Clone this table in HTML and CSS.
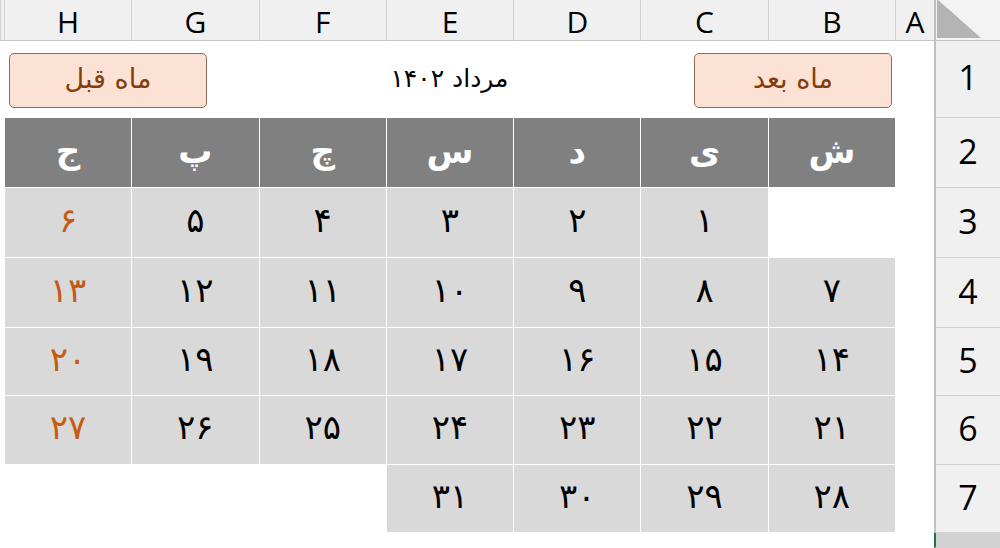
FILE: index.html
```html
<!DOCTYPE html>
<html lang="fa">
<head>
  <meta charset="UTF-8">
  <meta name="viewport" content="width=device-width, initial-scale=1.0">
  <title>تقویم مرداد ۱۴۰۲</title>
  <link rel="stylesheet" href="styles.css">
</head>
<body>

  <div class="sheet">
    <!-- column letters -->
    <div class="corner"><span class="corner-mark"></span></div>
    <div class="col-head">A</div>
    <div class="col-head">B</div>
    <div class="col-head">C</div>
    <div class="col-head">D</div>
    <div class="col-head">E</div>
    <div class="col-head">F</div>
    <div class="col-head">G</div>
    <div class="col-head">H</div>
    <div class="col-head"></div>

    <!-- row 1: navigation -->
    <div class="row-head">1</div>
    <div class="cell"></div>
    <div class="cell span-2 nav-next"><button class="nav-btn">ماه بعد</button></div>
    <div class="cell span-3 month-title">مرداد ۱۴۰۲</div>
    <div class="cell span-2 nav-prev"><button class="nav-btn">ماه قبل</button></div>
    <div class="cell"></div>

    <!-- row 2: week days -->
    <div class="row-head">2</div>
    <div class="cell"></div>
    <div class="day-name">ش</div>
    <div class="day-name">ی</div>
    <div class="day-name">د</div>
    <div class="day-name">س</div>
    <div class="day-name">چ</div>
    <div class="day-name">پ</div>
    <div class="day-name">ج</div>
    <div class="cell"></div>

    <!-- row 3 -->
    <div class="row-head">3</div>
    <div class="cell"></div>
    <div class="cell"></div>
    <div class="day">۱</div>
    <div class="day">۲</div>
    <div class="day">۳</div>
    <div class="day">۴</div>
    <div class="day">۵</div>
    <div class="day fri">۶</div>
    <div class="cell"></div>

    <!-- row 4 -->
    <div class="row-head">4</div>
    <div class="cell"></div>
    <div class="day">۷</div>
    <div class="day">۸</div>
    <div class="day">۹</div>
    <div class="day">۱۰</div>
    <div class="day">۱۱</div>
    <div class="day">۱۲</div>
    <div class="day fri">۱۳</div>
    <div class="cell"></div>

    <!-- row 5 -->
    <div class="row-head">5</div>
    <div class="cell"></div>
    <div class="day">۱۴</div>
    <div class="day">۱۵</div>
    <div class="day">۱۶</div>
    <div class="day">۱۷</div>
    <div class="day">۱۸</div>
    <div class="day">۱۹</div>
    <div class="day fri">۲۰</div>
    <div class="cell"></div>

    <!-- row 6 -->
    <div class="row-head">6</div>
    <div class="cell"></div>
    <div class="day">۲۱</div>
    <div class="day">۲۲</div>
    <div class="day">۲۳</div>
    <div class="day">۲۴</div>
    <div class="day">۲۵</div>
    <div class="day">۲۶</div>
    <div class="day fri">۲۷</div>
    <div class="cell"></div>

    <!-- row 7 -->
    <div class="row-head">7</div>
    <div class="cell"></div>
    <div class="day">۲۸</div>
    <div class="day">۲۹</div>
    <div class="day">۳۰</div>
    <div class="day">۳۱</div>
    <div class="cell"></div>
    <div class="cell"></div>
    <div class="cell"></div>
    <div class="cell"></div>

    <!-- row 8 (selected, cut off) -->
    <div class="row-head row-selected"></div>
  </div>

</body>
</html>
```

FILE: styles.css
```css
html, body {
  margin: 0;
  padding: 0;
  height: 100%;
  overflow: hidden;
  background-color: #fff;
}
.sheet {
  direction: rtl;
  display: grid;
  grid-template-columns: 66px 39px repeat(7, 127.3px) 1fr;
  grid-template-rows: 41px 77px 70px 70px 70px 68px 69px 68px 1fr;
  height: 100vh;
  font-family: "DejaVu Sans", sans-serif;
}
.corner {
  display: flex;
  align-items: flex-end;
  justify-content: flex-end;
  box-sizing: border-box;
  padding-left: 1px;
  padding-bottom: 2px;
  background-color: #f3f3f3;
  border-left: 2px solid #bfbfbf;
  border-bottom: 1px solid #c6c6c6;
}
.corner-mark {
  width: 44px;
  height: 39px;
  background-color: #b4b4b4;
  clip-path: polygon(0 0, 0 100%, 100% 100%);
}
.col-head {
  display: flex;
  align-items: center;
  justify-content: center;
  box-sizing: border-box;
  background-color: #f0f0f0;
  border-left: 1px solid #d2d2d2;
  border-bottom: 1px solid #c6c6c6;
  font-family: "Open Sans", sans-serif;
  font-size: 30px;
  color: #000;
  padding-top: 2px;
}
.row-head {
  grid-column: 1;
  display: flex;
  align-items: center;
  justify-content: center;
  box-sizing: border-box;
  background-color: #f0f0f0;
  border-left: 2px solid #bfbfbf;
  border-bottom: 1px solid #d0d0d0;
  font-family: "Open Sans", sans-serif;
  font-size: 34px;
  color: #000;
  padding-bottom: 4px;
}
.row-selected {
  background-color: #d2d2d2;
  border-left: 2px solid #217346;
}
.cell {
  background-color: #fff;
}
.span-2 {
  grid-column: span 2;
}
.span-3 {
  grid-column: span 3;
}
.nav-next,
.nav-prev {
  display: flex;
  align-items: center;
  box-sizing: border-box;
}
.nav-next {
  justify-content: flex-start;
  padding-right: 3px;
}
.nav-prev {
  justify-content: flex-end;
  padding-left: 5px;
}
.nav-btn {
  width: 198px;
  height: 55px;
  margin-top: 1px;
  background-color: #fbe2d5;
  border: 1px solid #8f6b57;
  border-radius: 5px;
  color: #843c0c;
  font-family: "DejaVu Sans", sans-serif;
  font-size: 27px;
  padding-bottom: 4px;
  cursor: pointer;
}
.month-title {
  display: flex;
  align-items: center;
  justify-content: center;
  font-size: 25px;
  color: #000;
  padding-bottom: 2px;
}
.day-name,
.day {
  display: flex;
  align-items: center;
  justify-content: center;
  box-sizing: border-box;
  border-left: 1px solid #fff;
  border-bottom: 1px solid #fff;
}
.day-name {
  background-color: #808080;
  color: #fff;
  font-weight: bold;
  font-size: 34px;
  padding-bottom: 4px;
}
.day {
  background-color: #d9d9d9;
  color: #000;
  font-size: 34px;
  padding-bottom: 6px;
}
.fri {
  color: #c55a11;
}
```
